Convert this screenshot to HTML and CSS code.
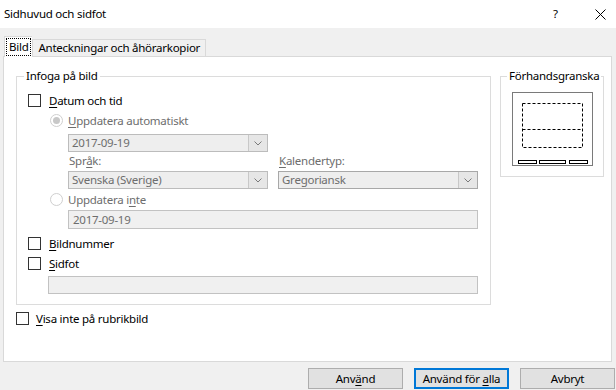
FILE: index.html
```html
<!DOCTYPE html>
<html lang="sv">
<head>
  <meta charset="UTF-8">
  <title>Sidhuvud och sidfot</title>
  <link rel="stylesheet" href="styles.css">
</head>
<body>
  <div class="dialog">
    <!-- Title bar -->
    <div class="titlebar">
      <span class="title">Sidhuvud och sidfot</span>
      <span class="help">?</span>
      <span class="close">
        <svg width="11" height="11" viewBox="0 0 11 11"><path d="M0.5 0.5 L10.5 10.5 M10.5 0.5 L0.5 10.5" stroke="#000" stroke-width="1" fill="none"/></svg>
      </span>
    </div>

    <!-- Tabs -->
    <div class="tabs">
      <div class="tab active"><span class="focus">Bild</span></div>
      <div class="tab">Anteckningar och åhörarkopior</div>
    </div>

    <div class="panel">
      <div class="panel-row">
        <div class="left-col">
          <fieldset class="group main-group">
            <legend>Infoga på bild</legend>

            <div class="check-row">
              <span class="box"></span>
              <span><u>D</u>atum och tid</span>
            </div>

            <div class="radio-row disabled">
              <span class="radio checked"></span>
              <span><u>U</u>ppdatera automatiskt</span>
            </div>
            <div class="select w200 first-select">
              <span class="select-text">2017-09-19</span>
              <span class="drop"><svg width="8" height="5" viewBox="0 0 8 5"><path d="M0.5 0.5 L4 4 L7.5 0.5" stroke="#7a7a7a" fill="none"/></svg></span>
            </div>

            <div class="select-pair">
              <div class="field">
                <div class="field-label">Spr<u>å</u>k:</div>
                <div class="select w200">
                  <span class="select-text">Svenska (Sverige)</span>
                  <span class="drop"><svg width="8" height="5" viewBox="0 0 8 5"><path d="M0.5 0.5 L4 4 L7.5 0.5" stroke="#7a7a7a" fill="none"/></svg></span>
                </div>
              </div>
              <div class="field">
                <div class="field-label"><u>K</u>alendertyp:</div>
                <div class="select w200 enabled">
                  <span class="select-text">Gregoriansk</span>
                  <span class="drop"><svg width="8" height="5" viewBox="0 0 8 5"><path d="M0.5 0.5 L4 4 L7.5 0.5" stroke="#7a7a7a" fill="none"/></svg></span>
                </div>
              </div>
            </div>

            <div class="radio-row disabled">
              <span class="radio"></span>
              <span>Uppdatera i<u>n</u>te</span>
            </div>
            <div class="textbox fixed-date">2017-09-19</div>

            <div class="check-row spaced">
              <span class="box"></span>
              <span><u>B</u>ildnummer</span>
            </div>
            <div class="check-row">
              <span class="box"></span>
              <span><u>S</u>idfot</span>
            </div>
            <div class="textbox footer-text"></div>
          </fieldset>

          <div class="check-row outer">
            <span class="box"></span>
            <span><u>V</u>isa inte på rubrikbild</span>
          </div>
        </div>

        <div class="preview-group">
          <div class="preview-title">Förhandsgranska</div>
          <svg class="preview" width="81" height="74" viewBox="0 0 81 74">
            <rect x="0.5" y="0.5" width="80" height="73" fill="#fff" stroke="#7a7a7a"/>
            <rect x="10.5" y="11.5" width="60" height="44" fill="none" stroke="#000" stroke-dasharray="3 2"/>
            <path d="M10.5 37.5 H70.5" stroke="#000" stroke-dasharray="3 2"/>
            <rect x="6.5" y="68.5" width="18" height="3" fill="#fff" stroke="#000"/>
            <rect x="27.5" y="68.5" width="26" height="3" fill="#fff" stroke="#000"/>
            <rect x="57.5" y="68.5" width="18" height="3" fill="#fff" stroke="#000"/>
          </svg>
        </div>
      </div>
    </div>

    <!-- Bottom buttons -->
    <div class="buttons">
      <button class="btn">Anv<u>ä</u>nd</button>
      <button class="btn default">Använd för <u>a</u>lla</button>
      <button class="btn">Avbryt</button>
    </div>
  </div>
</body>
</html>
```

FILE: styles.css
```css
/* General styles */
* {
  box-sizing: border-box;
}

body {
  margin: 0;
  padding: 0;
  font-family: 'Segoe UI', 'Noto Sans', sans-serif;
  font-size: 11.5px;
  letter-spacing: -0.25px;
  color: #000;
  background: #f0f0f0;
}

u {
  text-decoration: underline;
  text-underline-offset: 2px;
}

.dialog {
  width: 616px;
  height: 390px;
  overflow: hidden;
}

/* Title bar */
.titlebar {
  height: 28px;
  background: #fff;
  display: flex;
  align-items: center;
  padding-left: 4px;
}

.title {
  flex: 1;
  line-height: 16px;
}

.help {
  width: 12px;
  margin-right: 30px;
  line-height: 16px;
}

.close {
  width: 11px;
  height: 11px;
  margin-right: 10px;
  display: flex;
}

/* Tabs */
.tabs {
  height: 29px;
  margin-bottom: -1px;
  padding-left: 4px;
  display: flex;
  align-items: flex-end;
  position: relative;
  z-index: 1;
}

.tab {
  height: 17px;
  margin-bottom: 1px;
  padding: 0 5px 0 5px;
  border: 1px solid #d9d9d9;
  border-bottom: none;
  line-height: 16px;
  white-space: nowrap;
}

.tab.active {
  height: 21px;
  margin-bottom: 0;
  padding: 2px 2px 0;
  background: #fff;
  border-right: none;
}

.tab.active .focus {
  display: block;
  height: 16px;
  padding: 0 2px;
  outline: 1px dotted #000;
  line-height: 15px;
}

/* Panel */
.panel {
  height: 306px;
  margin: 0 4px 0 3px;
  padding: 11px 0 0 12px;
  background: #fff;
  border: 1px solid #d9d9d9;
}

.panel-row {
  display: flex;
  align-items: flex-start;
}

.left-col {
  width: 475px;
  flex: none;
}

.group {
  margin: 0;
  min-width: 0;
  border: 1px solid #dcdcdc;
}

.group legend {
  padding: 0 2px;
  line-height: 16px;
}

.main-group {
  width: 475px;
  padding: 6px 11px 10px;
}

.main-group legend {
  margin-left: -4px;
}

/* Preview box */
.preview-group {
  width: 104px;
  height: 101px;
  flex: none;
  margin: 8px 0 0 9px;
  border: 1px solid #dcdcdc;
}

.preview-title {
  width: fit-content;
  margin: -9px 0 0 6px;
  padding: 0 2px;
  line-height: 16px;
  white-space: nowrap;
  background: #fff;
}

.preview {
  display: block;
  margin: 8px 0 0 11px;
}

/* Checkboxes and radio buttons */
.check-row,
.radio-row {
  height: 20px;
  display: flex;
  align-items: center;
}

.radio-row {
  height: 21px;
  padding-left: 22px;
}

.check-row.spaced {
  margin-top: 4px;
}

.check-row.outer {
  margin-top: 3px;
}

.check-row.outer .box {
  margin-right: 7px;
}

.box {
  width: 13px;
  height: 13px;
  margin-right: 8px;
  border: 1px solid #333;
  background: #fff;
}

.radio {
  width: 13px;
  height: 13px;
  margin-right: 5px;
  border: 1px solid #cfcfcf;
  border-radius: 50%;
  background: #fff;
  display: flex;
  align-items: center;
  justify-content: center;
}

.radio.checked::after {
  content: "";
  width: 7px;
  height: 7px;
  border-radius: 50%;
  background: #c8c8c8;
}

.disabled,
.field-label,
.select-text,
.textbox {
  color: #6d6d6d;
}

/* Selects and text boxes */
.select {
  height: 18px;
  display: flex;
  border: 1px solid #bcbcbc;
  background: #eeeeee;
}

.select.enabled {
  border-color: #a8a8a8;
}

.w200 {
  width: 200px;
}

.first-select {
  margin: 3px 0 0 40px;
}

.select-text {
  flex: 1;
  padding-left: 3px;
  line-height: 16px;
}

.drop {
  width: 19px;
  border-left: 1px solid #c8c8c8;
  background: #e6e6e6;
  display: flex;
  align-items: center;
  justify-content: center;
}

.select-pair {
  display: flex;
  gap: 10px;
  padding-left: 40px;
}

.field-label {
  height: 17px;
  margin-bottom: 2px;
  padding-left: 1px;
  line-height: 17px;
}

.textbox {
  height: 19px;
  padding-left: 4px;
  line-height: 17px;
  border: 1px solid #c2c2c2;
  background: #f0f0f0;
}

.fixed-date {
  width: 410px;
  margin-left: 40px;
}

.footer-text {
  width: 430px;
  height: 18px;
  margin: 3px 0 0 20px;
}

/* Buttons */
.buttons {
  height: 28px;
  padding: 6px 1px 0 0;
  display: flex;
  justify-content: flex-end;
  gap: 11px;
}

.btn {
  width: 95px;
  height: 21px;
  padding: 0;
  font-family: inherit;
  font-size: 11.5px;
  letter-spacing: -0.25px;
  color: #000;
  background: #e1e1e1;
  border: 1px solid #adadad;
}

.btn.default {
  border: 2px solid #0078d7;
}
```
